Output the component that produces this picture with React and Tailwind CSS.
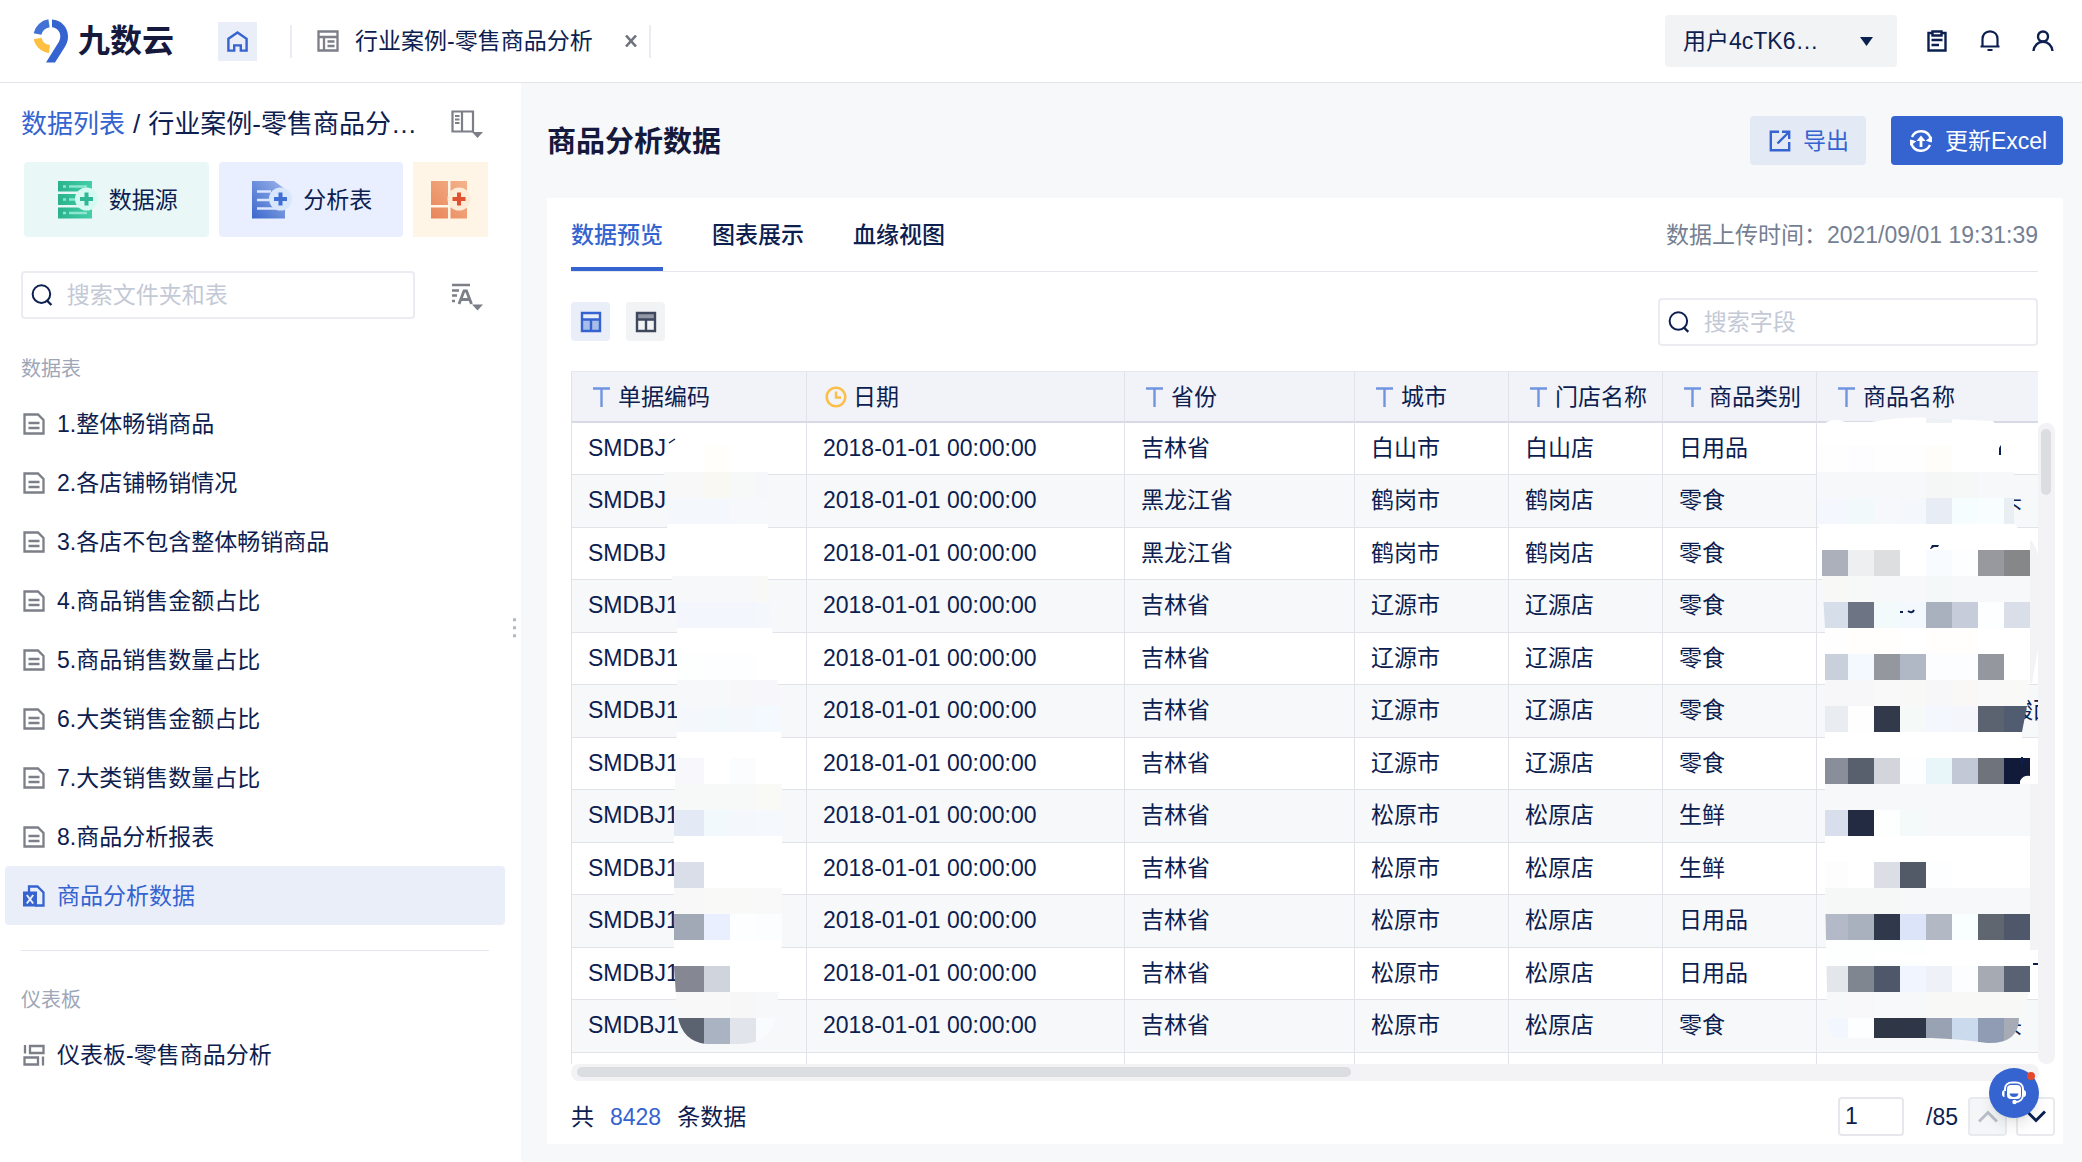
import { useState } from 'react';

const TABLES = [
  '1.整体畅销商品',
  '2.各店铺畅销情况',
  '3.各店不包含整体畅销商品',
  '4.商品销售金额占比',
  '5.商品销售数量占比',
  '6.大类销售金额占比',
  '7.大类销售数量占比',
  '8.商品分析报表',
];

const COLUMNS = [
  { label: '单据编码', type: 'text', width: 'w-[235px]' },
  { label: '日期', type: 'date', width: 'w-[318px]' },
  { label: '省份', type: 'text', width: 'w-[230px]' },
  { label: '城市', type: 'text', width: 'w-[154px]' },
  { label: '门店名称', type: 'text', width: 'w-[154px]' },
  { label: '商品类别', type: 'text', width: 'w-[154px]' },
  { label: '商品名称', type: 'text', width: 'w-[260px]' },
];

const DATE = '2018-01-01 00:00:00';

const ROWS = [
  ['SMDBJ1', DATE, '吉林省', '白山市', '白山店', '日用品', ''],
  ['SMDBJ', DATE, '黑龙江省', '鹤岗市', '鹤岗店', '零食', '头'],
  ['SMDBJ', DATE, '黑龙江省', '鹤岗市', '鹤岗店', '零食', ''],
  ['SMDBJ1', DATE, '吉林省', '辽源市', '辽源店', '零食', ''],
  ['SMDBJ1', DATE, '吉林省', '辽源市', '辽源店', '零食', ''],
  ['SMDBJ1', DATE, '吉林省', '辽源市', '辽源店', '零食', '酸面'],
  ['SMDBJ1', DATE, '吉林省', '辽源市', '辽源店', '零食', ''],
  ['SMDBJ1', DATE, '吉林省', '松原市', '松原店', '生鲜', ''],
  ['SMDBJ1', DATE, '吉林省', '松原市', '松原店', '生鲜', ''],
  ['SMDBJ1', DATE, '吉林省', '松原市', '松原店', '日用品', ''],
  ['SMDBJ1', DATE, '吉林省', '松原市', '松原店', '日用品', ''],
  ['SMDBJ1', DATE, '吉林省', '松原市', '松原店', '零食', '头'],
  ['', '', '', '', '', '', ''],
];

// One entry per 26px band, top to bottom
const W = '#ffffff';
const G = '#f7f8fa';
const CODE_MASK = [
  [W, '#fffefb', W, W],
  ['#f7f8f7', '#f9f8f3', '#f7f9f8', '#f6f7fb'],
  ['#f4f8fd', '#f4f8fd', '#f6f8fb', '#f7f8fb'],
  [W, W, W, W],
  [W, W, W, W],
  [G, G, G, '#f8f8f7'],
  ['#f3f7fd', '#f3f7fd', '#f3f7fd', '#f4f8fd'],
  [W, W, W, W],
  ['#fdfefe', '#fdfeff', '#fdfeff', W],
  [G, '#f7f8f9', '#f7f7fa', '#f7f6fb'],
  ['#f4f8fd', '#f3f8fd', '#f4f8fd', '#f3f9fe'],
  [W, W, W, W],
  ['#f8f7fc', W, '#fbfcfe', W],
  ['#f7f8f8', '#f7f8f8', '#f7f8f8', '#f9f9f5'],
  ['#e4eaf5', '#f1f9fc', '#f4f8fd', '#f5f9fe'],
  [W, W, W, W],
  ['#dadee8', W, W, W],
  ['#f8f8f8', '#f9f9f8', '#f9f9f8', '#f9f9f9'],
  ['#a2a9b6', '#e9efff', '#fdfeff', '#fcfdfe'],
  [W, W, W, W],
  ['#858793', '#d0d5dd', W, W],
  ['#f8f8f8', '#f8f8f8', '#f7f7f8', G],
  ['#5b6370', '#a9b3c2', '#e1e4ea', '#f8fcff'],
];

const NAME_MASK = [
  ['#fdfefd', '#fdfdff', '#fefeff', '#fefeff', '#fefdfa', W, W, W],
  [G, G, G, G, '#f5f7f6', '#f6f8f7', G, G],
  ['#f4f7fd', '#f1f9fa', '#f6f8fb', '#f4f7fc', '#e8ecf5', '#f6fdff', '#f8feff', '#e9eef3'],
  [W, W, W, W, W, W, W, W],
  ['#acb0bb', '#eeeff1', '#dcdee0', W, '#f8fbff', '#fdfeff', '#97999e', '#858789'],
  ['#f8f9f6', '#f7f8f8', G, G, '#f5f8f8', G, G, G],
  ['#d6deea', '#6d7484', '#f3fafc', '#f3f8fe', '#a9b0be', '#c6ccd9', '#fcfeff', '#d9dee8'],
  ['#fefefe', '#fffefc', '#fffefc', W, '#fffefc', '#fffefd', W, W],
  ['#c9cfdb', '#f4f9ff', '#94979d', '#b0b7c5', '#fbfdff', '#fcfdff', '#94979d', W],
  ['#f7f7fa', '#f7f7fa', '#f8f9f8', '#f8f9f7', '#f7f7fa', '#f9f8f7', '#f8f9f8', '#f9f9f7'],
  ['#e9edf1', '#fefefe', '#31394a', '#f5f9f8', '#f4f7fd', '#f4f6fb', '#5b6270', '#515c70'],
  [W, W, W, W, W, W, W, W],
  ['#8a8e9a', '#58606e', '#d2d6dc', '#fcfeff', '#e9f6f9', '#c3c8d6', '#6f747c', '#121a3a'],
  [G, G, G, G, G, G, G, G],
  ['#d8deeb', '#232b42', '#fdfefe', '#f4f9f9', G, G, G, G],
  [W, W, W, W, W, W, W, W],
  ['#fefdfe', W, '#dbdfe5', '#525a68', '#fcfeff', W, W, W],
  ['#f6f8f8', '#f6f8f8', '#f6f8f8', G, G, G, G, G],
  ['#b3b9c6', '#a9b0be', '#30384b', '#dbe4f8', '#b2b8c4', '#f9feff', '#60666f', '#4e586a'],
  ['#fdfefe', '#fdfefe', '#fdfefe', '#fdfefe', W, W, W, W],
  ['#e3e7ec', '#80868f', '#4f586a', '#f1f5ff', '#eef1f8', '#fcfdff', '#a6aab2', '#596273'],
  [G, '#f8f8fa', '#f8f9fb', '#f7f8fa', '#f8f9f7', '#f8f9f7', '#f8f9f7', '#f8f9f7'],
  ['#f2f6fe', '#fdfeff', '#2f3746', '#2f3648', '#98a2b2', '#cbdaec', '#8f9cb4', '#a6abb5'],
];

const Blocks = ({ rows, x }) =>
  rows.map((row, r) =>
    row.map((fill, c) => (
      // first column runs under the clip edge on its left side
      <rect
        key={`${r}-${c}`}
        x={c === 0 ? x - 14 : x + c * 26}
        y={75 + r * 26}
        width={c === 0 ? 40 : 26}
        height={26}
        fill={fill}
      />
    ))
  );

const Mosaic = () => (
  <svg className="absolute left-0 top-0 pointer-events-none" width="1484" height="693" viewBox="0 0 1484 693" shapeRendering="crispEdges" aria-hidden="true">
    <defs>
      <clipPath id="codeMask">
        <path d="M94 76 L100 60 Q150 48 200 56 Q206 70 197 101 L197 205 L201 257 L207 309 L210 361 L213 413 L212 517 L211 569 L208 621 L204 647 Q200 673 168 673 L135 673 Q109 670 106 640 L103 595 L103 439 L106 361 L106 257 L101 205 L96 153 L93 101 Z" />
      </clipPath>
      <clipPath id="nameMask">
        <path d="M1246 60 Q1258 44 1274 51 L1300 51 Q1340 44 1374 48 L1422 50 Q1430 60 1430 70 Q1428 88 1398 101 L1443 101 L1443 153 L1459 170 L1459 304 L1456 335 L1451 361 L1451 387 L1459 387 L1459 621 L1448 647 Q1448 673 1416 672 Q1390 668 1360 667 L1262 667 Q1254 655 1256 621 L1254 517 L1254 257 L1251 205 L1251 179 L1247 153 L1246 101 Z" />
      </clipPath>
    </defs>
    <g clipPath="url(#codeMask)">
      <rect x="90" y="60" width="130" height="16" fill="#ffffff" />
      <Blocks rows={CODE_MASK} x={107} />
    </g>
    <path d="M98 72 L104 68" stroke="#0c2050" strokeWidth="1.500" shapeRendering="auto" />
    <g clipPath="url(#nameMask)">
      <rect x="1240" y="40" width="220" height="36" fill="#ffffff" />
      <rect x="1355" y="40" width="26" height="12" fill="#eef2f7" />
      <Blocks rows={NAME_MASK} x={1251} />
    </g>
    <g shapeRendering="auto">
      <path d="M1459 169 Q1464 172 1467 184 L1467 278 L1461 312 L1459 312 Z" fill="#f3f3f5" />
      <path d="M1459 413 H1467 V579 H1459 Z" fill="#f3f3f5" />
      <path d="M1304 579 L1350 584 L1392 590 L1304 590 Z" fill="#ffffff" />
      <path d="M1449 410 Q1452 404 1459 405 V413 H1449 Z" fill="#ffffff" />
      <path d="M1428 77 L1430 74 V84 H1428 Z" fill="#0c2050" />
      <path d="M1359 178 L1361 174 H1368 L1367 176 H1363 L1360 178 Z" fill="#0c2050" />
      <path d="M1329 241 L1332 241 M1337 240 Q1341 243 1343 239" stroke="#0c2050" strokeWidth="2" fill="none" />
      <path d="M1462 593 H1467" stroke="#0c2050" strokeWidth="2" />
      <path d="M1450 386 H1452 V394 H1450 Z" fill="#0c2050" />
    </g>
  </svg>
);

const Logo = () => (
  <svg width="36" height="44" viewBox="0 0 36 44" fill="none" aria-hidden="true">
    <path d="M16 4.200 A14 14 0 0 0 4.500 15" stroke="#4372d6" strokeWidth="8" />
    <path d="M4.600 19.500 A14 13 0 0 0 16.500 30" stroke="#fdc043" strokeWidth="8" />
    <path d="M19 0.500 C28 1 35 8 35 17.500 C35 22 33.500 25 31.500 28.500 L22 43.500 H13 L24.500 25 C26.500 22 27.300 20 27.300 17 C27.300 12.500 24 8.800 19 8.200 Z" fill="#3563d0" />
  </svg>
);

const HomeIcon = () => (
  <svg width="21" height="21" viewBox="0 0 21 21" fill="none" stroke="#3563d0" strokeWidth="2.400" aria-hidden="true">
    <path d="M1.400 7.800 L10.500 1.500 L19.600 7.800 V19.600 H13.800 V14.400 H7.200 V19.600 H1.400 Z" />
  </svg>
);

const ReportIcon = () => (
  <svg width="22" height="22" viewBox="0 0 22 22" fill="none" stroke="#7c7f88" strokeWidth="2.300" aria-hidden="true">
    <path d="M1.500 1.500 H20.500 V20.500 H1.500 Z M1.500 7 H20.500 M7 7 V20.500 M10.500 11.500 H17.500 M10.500 16 H17.500" />
  </svg>
);

const FileIcon = () => (
  <svg width="22" height="22" viewBox="0 0 22 22" fill="none" stroke="#7c7f88" strokeWidth="2.300" aria-hidden="true">
    <path d="M1.500 1.500 H15 L20.500 7 V20.500 H1.500 Z M5.500 10 H16.500 M5.500 15 H16.500" />
  </svg>
);

const ExcelIcon = () => (
  <svg width="22" height="22" viewBox="0 0 22 22" fill="none" aria-hidden="true">
    <path d="M6 7 V1.500 H14.500 L20.500 7.500 V20.500 H12" stroke="#3563d0" strokeWidth="2.300" />
    <path d="M0 6.500 H14 V21.500 H0 Z" fill="#3563d0" />
    <path d="M3.800 10 L10.200 18.500 M10.200 10 L3.800 18.500" stroke="#eaeef9" strokeWidth="2" />
  </svg>
);

const DashboardIcon = () => (
  <svg width="22" height="22" viewBox="0 0 22 22" fill="none" stroke="#7c7f88" strokeWidth="2.300" aria-hidden="true">
    <path d="M2 1 V9.500 M7 2 H20.500 V9 H7 Z M1.500 13.500 H15 V20.500 H1.500 Z M20 12.500 V21.500" />
  </svg>
);

const PanelIcon = () => (
  <svg width="32" height="28" viewBox="0 0 32 28" aria-hidden="true">
    <path d="M1.500 1.500 H22 V21.500 H1.500 Z M11 1.500 V21.500 M4 6 H8.500 M4 9.500 H8.500 M4 13 H8.500" fill="none" stroke="#7c7f88" strokeWidth="2.200" />
    <path d="M21 22 H32 L26.500 28 Z" fill="#7c7f88" />
  </svg>
);

const SortIcon = () => (
  <svg width="32" height="28" viewBox="0 0 32 28" aria-hidden="true">
    <path d="M1 2 H19 M1 7.500 H8 M1 12.500 H6 M1 18 H4" fill="none" stroke="#7c7f88" strokeWidth="2.400" />
    <path d="M8 21 L13 8 H15.500 L20.500 21 M10.200 16.500 H18.500" fill="none" stroke="#7c7f88" strokeWidth="2.800" />
    <path d="M21 21.500 H32 L26.500 27.500 Z" fill="#7c7f88" />
  </svg>
);

const SearchIcon = () => (
  <svg width="24" height="24" viewBox="0 0 24 24" fill="none" stroke="#0c2050" strokeWidth="2.200" aria-hidden="true">
    <circle cx="11.500" cy="11" r="9.700" />
    <path d="M17 17.500 L22.500 23" strokeWidth="2.600" />
  </svg>
);

const SourceArt = () => (
  <svg width="42" height="40" viewBox="0 0 42 40" aria-hidden="true">
    <defs>
      <linearGradient id="src" x1="0" x2="1">
        <stop offset="0" stopColor="#2bb28c" />
        <stop offset="1" stopColor="#43cfaa" />
      </linearGradient>
    </defs>
    <path d="M1 1 H35 V11.500 H1 Z M1 14 H35 V25 H1 Z M1 27.500 H35 V38.500 H1 Z" fill="url(#src)" />
    <path d="M6 6.500 H9 M12 6.500 H30 M6 19.500 H9 M12 19.500 H18 M6 33 H9 M12 33 H30" stroke="#8fe6cf" strokeWidth="2.500" />
    <circle cx="29.500" cy="19" r="11.500" fill="#d6faf2" />
    <path d="M29.500 12.500 V25.500 M23 19 H36" stroke="#2fb893" strokeWidth="4" />
  </svg>
);

const AnalysisArt = () => (
  <svg width="42" height="40" viewBox="0 0 42 40" aria-hidden="true">
    <defs>
      <linearGradient id="ana" x1="0" y1="1" x2="1" y2="0">
        <stop offset="0" stopColor="#3a68cc" />
        <stop offset="1" stopColor="#9db4ea" />
      </linearGradient>
    </defs>
    <path d="M1 1 H23 L34 9 V38.500 H1 Z" fill="url(#ana)" />
    <path d="M6 11.500 H20 M6 20 H18 M6 28.500 H26" stroke="#dbe6ff" strokeWidth="2.600" />
    <circle cx="29.500" cy="19" r="11.500" fill="#d8e6fc" />
    <path d="M29.500 12.500 V25.500 M23 19 H36" stroke="#3f6fd3" strokeWidth="4" />
  </svg>
);

const BoardArt = () => (
  <svg width="42" height="40" viewBox="0 0 42 40" aria-hidden="true">
    <defs>
      <linearGradient id="brd" x1="0" y1="1" x2="1" y2="0">
        <stop offset="0" stopColor="#e8855a" />
        <stop offset="1" stopColor="#f5b48c" />
      </linearGradient>
    </defs>
    <path d="M1 1 H18 V25 H1 Z M20.500 1 H37 V25 H20.500 Z M1 27.500 H18 V38.500 H1 Z M20.500 27.500 H37 V38.500 H20.500 Z" fill="url(#brd)" />
    <circle cx="29" cy="19" r="11.500" fill="#fdebd6" />
    <path d="M29 12.500 V25.500 M22.500 19 H35.500" stroke="#e2512f" strokeWidth="4" />
  </svg>
);

const TypeIcon = ({ type }) =>
  type === 'date' ? (
    <svg width="22" height="22" viewBox="0 0 22 22" fill="none" stroke="#fcbf49" strokeWidth="2.600" aria-hidden="true">
      <circle cx="11" cy="11" r="9.300" />
      <path d="M11 5.500 V11.500 H16" strokeWidth="2.400" />
    </svg>
  ) : (
    <svg width="22" height="22" viewBox="0 0 22 22" fill="none" stroke="#6f95e0" strokeWidth="2.400" aria-hidden="true">
      <path d="M3 2.500 H20 M11.500 2.500 V21" />
    </svg>
  );

const Sidebar = () => (
  <aside className="relative w-[521px] shrink-0 bg-white">
    <div className="flex h-[79px] items-center pl-[21px] pt-[2px]">
      <p className="w-[430px] whitespace-nowrap text-[26px] leading-8">
        <a href="#list" className="text-[#3563d0]">数据列表</a>
        <span className="mx-2">/</span>
        行业案例-零售商品分…
      </p>
      <button type="button" aria-label="布局"><PanelIcon /></button>
    </div>

    <div className="flex gap-[10px] pl-6 pr-[33px]">
      <button type="button" className="flex h-[75px] flex-1 items-center justify-center gap-[10px] rounded bg-[#e9f7f7] pl-[2px]">
        <SourceArt /> 数据源
      </button>
      <button type="button" className="flex h-[75px] flex-1 items-center justify-center gap-[10px] rounded bg-[#e9efff] pl-[2px]">
        <AnalysisArt /> 分析表
      </button>
      <button type="button" aria-label="仪表板" className="flex h-[75px] w-[75px] items-center justify-center bg-[#fff5e7]">
        <BoardArt />
      </button>
    </div>

    <div className="mt-[34px] flex items-center pl-[21px]">
      <label className="flex h-12 w-[394px] items-center gap-[14px] rounded border-2 border-[#ebecf2] pl-2">
        <SearchIcon />
        <input type="text" aria-label="搜索文件夹和表" placeholder="搜索文件夹和表" className="w-full outline-none placeholder:text-[#c3c9d5]" />
      </label>
      <button type="button" aria-label="排序" className="ml-9 pt-1"><SortIcon /></button>
    </div>

    <h2 className="mt-[25px] pl-[21px] text-[20px] leading-[50px] text-[#9ea6b8]">数据表</h2>
    <nav className="pl-[5px] pr-4">
      {TABLES.map((name) => (
        <a key={name} href="#table" className="flex h-[59px] items-center gap-3 px-[18px]">
          <FileIcon /> {name}
        </a>
      ))}
      <a href="#table" className="flex h-[59px] items-center gap-3 rounded bg-[#eaeef9] px-[18px] text-[#3563d0]">
        <ExcelIcon /> 商品分析数据
      </a>
    </nav>
    <hr className="ml-[21px] mr-8 mt-[25px] border-[#e6e7ee]" />
    <h2 className="mt-6 pl-[21px] text-[20px] leading-[50px] text-[#9ea6b8]">仪表板</h2>
    <nav className="pl-[5px] pr-4">
      <a href="#board" className="flex h-[59px] items-center gap-3 px-[18px]">
        <DashboardIcon /> 仪表板-零售商品分析
      </a>
    </nav>

    {/* drag handle */}
    <div className="absolute right-[5px] top-1/2 flex -translate-y-1/4 flex-col gap-[5px]">
      <span className="h-[3px] w-[3px] bg-[#b4b8c2]"></span>
      <span className="h-[3px] w-[3px] bg-[#b4b8c2]"></span>
      <span className="h-[3px] w-[3px] bg-[#b4b8c2]"></span>
    </div>
  </aside>
);

const Header = () => (
  <header className="flex h-[83px] shrink-0 items-center border-b border-[#e3e4ea] bg-white pl-[33px] pr-7">
    <Logo />
    <span className="ml-[9px] text-[32px] font-bold leading-10 text-[#15193c]">九数云</span>
    <button type="button" aria-label="首页" className="ml-[44px] flex h-[39px] w-[39px] items-center justify-center bg-[#eaeef9]">
      <HomeIcon />
    </button>
    <div className="ml-[33px] flex h-[33px] items-center border-x-2 border-[#ebecf1] pl-[25px] pr-3">
      <ReportIcon />
      <span className="ml-4 w-[240px] whitespace-nowrap">行业案例-零售商品分析</span>
      <button type="button" aria-label="关闭" className="ml-[30px]">
        <svg width="12" height="12" viewBox="0 0 12 12" fill="none" stroke="#6f737c" strokeWidth="2.600" aria-hidden="true">
          <path d="M1 0.500 L11 11.500 M11 0.500 L1 11.500" />
        </svg>
      </button>
    </div>

    <div className="relative ml-auto">
      <select aria-label="用户" className="h-[52px] w-[232px] appearance-none rounded bg-[#f2f3f5] pl-[18px]">
        <option>用户4cTK6…</option>
      </select>
      <svg className="pointer-events-none absolute right-6 top-[22px]" width="13" height="9" viewBox="0 0 13 9" aria-hidden="true">
        <path d="M0 0 H13 L6.500 9 Z" fill="#0c2050" />
      </svg>
    </div>
    <button type="button" aria-label="任务" className="ml-[29px]">
      <svg width="22" height="22" viewBox="0 0 22 22" fill="none" stroke="#0c2050" strokeWidth="2.400" aria-hidden="true">
        <path d="M6.500 3 H2.500 V20.500 H19.500 V3 H15.500 M6.500 1.500 H15.500 V5.500 H6.500 Z M5.500 10 H16.500 M5.500 15 H13" />
      </svg>
    </button>
    <button type="button" aria-label="通知" className="ml-[31px]">
      <svg width="22" height="22" viewBox="0 0 22 22" fill="none" stroke="#0c2050" strokeWidth="2.200" aria-hidden="true">
        <path d="M3.500 16 V9 C3.500 4.500 6.500 1.300 11 1.300 C15.500 1.300 18.500 4.500 18.500 9 V16 M1.500 16.500 H20.500 M8.500 20 H13.500" />
      </svg>
    </button>
    <button type="button" aria-label="账户" className="ml-[31px]">
      <svg width="22" height="22" viewBox="0 0 22 22" fill="none" stroke="#0c2050" strokeWidth="2.400" aria-hidden="true">
        <circle cx="11" cy="6.500" r="5" />
        <path d="M1.500 21 C2 15.500 6 11.800 11 11.800 C16 11.800 20 15.500 20.500 21" />
      </svg>
    </button>
  </header>
);

const DataTable = () => (
  <table className="w-[1505px] table-fixed border-separate border-spacing-0 text-left">
    <thead>
      <tr>
        {COLUMNS.map((col) => (
          <th key={col.label} className={`${col.width} h-[52px] border-b-2 border-l border-t border-b-[#d5dae4] border-l-[#e1e3e9] border-t-[#e6e8ed] bg-[#f2f3f8] p-0 pl-[18px] font-normal`}>
            <span className="flex items-center gap-[6px] whitespace-nowrap">
              <TypeIcon type={col.type} /> {col.label}
            </span>
          </th>
        ))}
      </tr>
    </thead>
    <tbody>
      {ROWS.map((row, r) => (
        <tr key={r} className={r % 2 ? 'h-[53px] bg-[#f7f8fa]' : 'h-[52px] bg-white'}>
          {row.map((cell, c) => (
            <td
              key={c}
              className={`overflow-hidden whitespace-nowrap border-b border-l border-[#e1e3e9] p-0 pb-[2px] ${c === 6 ? (cell.length > 1 ? 'pl-[193px]' : 'pl-[182px]') : 'pl-4'}`}
            >
              {cell}
            </td>
          ))}
        </tr>
      ))}
    </tbody>
  </table>
);

const App = () => {
  const [tab, setTab] = useState('数据预览');
  const [page, setPage] = useState('1');

  return (
    <div className="flex h-screen flex-col bg-[#f7f8fa] text-[23px] leading-8 text-[#0c2050] [font-family:'Liberation_Sans','Noto_Sans_CJK_SC',sans-serif]">
      <Header />
      <div className="flex min-h-0 flex-1">
        <Sidebar />
        <main className="flex min-w-0 flex-1 flex-col pb-[18px] pl-[26px] pr-[19px]">
          <div className="my-[33px] flex h-[49px] shrink-0 items-center">
            <h1 className="pt-[2px] text-[29px] font-bold text-[#15193c]">商品分析数据</h1>
            <button type="button" className="ml-auto flex h-[49px] w-[116px] items-center justify-center gap-3 rounded bg-[#e4eaf5] pl-[2px] text-[#3563d0]">
              <svg width="22" height="22" viewBox="0 0 22 22" fill="none" stroke="#3563d0" strokeWidth="2.400" aria-hidden="true">
                <path d="M10 1.800 H1.800 V20.200 H20.200 V12 M13 1.800 H20.200 V9 M20 2 L8.500 13.500" />
              </svg>
              导出
            </button>
            <button type="button" className="ml-[25px] flex h-[49px] w-[172px] items-center justify-center gap-3 rounded bg-[#3563d0] pl-[2px] text-white">
              <svg width="24" height="24" viewBox="0 0 24 24" fill="none" stroke="#ffffff" strokeWidth="2.400" aria-hidden="true">
                <path d="M3 8 A10 10 0 0 1 21.500 9 M21 16 A10 10 0 0 1 2.500 15" />
                <path d="M22.500 13 L17.500 11.500 L22.500 8 Z M1.500 11 L6.500 12.500 L1.500 16 Z" fill="#ffffff" strokeWidth="1" />
                <path d="M12 18 V9" strokeWidth="2.800" />
                <path d="M7.500 12 L12 6.500 L16.500 12 Z" fill="#ffffff" stroke="none" />
              </svg>
              更新Excel
            </button>
          </div>

          <section className="flex min-h-0 flex-1 flex-col bg-white pl-6 pr-2">
            {/* tabs */}
            <div className="mr-[17px] flex h-[74px] shrink-0 gap-[49px] border-b border-[#e6e7ee]">
              {['数据预览', '图表展示', '血缘视图'].map((name) => (
                <button
                  key={name}
                  type="button"
                  onClick={() => setTab(name)}
                  className={`h-[73px] border-y-4 border-t-transparent font-medium ${tab === name ? 'border-b-[#3563d0] text-[#3563d0]' : 'border-b-transparent'}`}
                >
                  {name}
                </button>
              ))}
              <p className="ml-auto self-center text-[#757f93]">数据上传时间：2021/09/01 19:31:39</p>
            </div>

            {/* toolbar */}
            <div className="mr-[17px] flex h-[99px] shrink-0 items-center gap-4">
              <button type="button" aria-label="表格视图" className="flex h-[39px] w-[39px] items-center justify-center rounded bg-[#eaeef9]">
                <svg width="22" height="22" viewBox="0 0 22 22" aria-hidden="true">
                  <path d="M2 9 H20 V20 H2 Z" fill="#a9bdea" />
                  <path d="M2 2 H20 V20 H2 Z M2 8.500 H20 M11 8.500 V20" fill="none" stroke="#3563d0" strokeWidth="2.400" />
                </svg>
              </button>
              <button type="button" aria-label="表头视图" className="flex h-[39px] w-[39px] items-center justify-center rounded bg-[#f2f3f5]">
                <svg width="22" height="22" viewBox="0 0 22 22" aria-hidden="true">
                  <path d="M2 2 H20 V8.500 H2 Z" fill="#9298a6" />
                  <path d="M2 2 H20 V20 H2 Z M2 8.500 H20 M11 8.500 V20" fill="none" stroke="#3f475f" strokeWidth="2.400" />
                </svg>
              </button>
              <label className="ml-auto flex h-12 w-[380px] items-center gap-[14px] rounded border-2 border-[#ebecf2] pl-2">
                <SearchIcon />
                <input type="text" aria-label="搜索字段" placeholder="搜索字段" className="w-full outline-none placeholder:text-[#c3c9d5]" />
              </label>
            </div>

            {/* grid with its scroll bars */}
            <div className="flex min-h-0 flex-1">
              <div className="relative min-w-0 flex-1 overflow-hidden">
                <DataTable />
                <Mosaic />
              </div>
              <div className="mt-[52px] w-[17px] shrink-0 rounded-lg bg-[#f3f3f5] px-[3px] pt-[6px]">
                <div className="h-[66px] w-[10px] rounded-full bg-[#dcdde0]"></div>
              </div>
            </div>
            <div className="mr-4 h-[17px] shrink-0 rounded-lg bg-[#f3f3f5] px-[6px] pt-[3px]">
              <div className="h-[10px] w-[774px] rounded-full bg-[#dcdde0]"></div>
            </div>

            <div className="flex h-[63px] shrink-0 items-center pt-2">
              <p>共<span className="mx-4 text-[#3563d0]">8428</span>条数据</p>
              <input
                type="text"
                aria-label="页码"
                value={page}
                onChange={(e) => setPage(e.target.value)}
                className="ml-auto h-[39px] w-[66px] rounded border-2 border-[#e6e7ec] pl-[5px] outline-none"
              />
              <span className="ml-[22px] mr-[10px]">/85</span>
              <button type="button" disabled aria-label="上一页" className="flex h-[39px] w-[39px] items-center justify-center rounded border-2 border-[#e9eaee] bg-[#f5f6f8]">
                <svg width="20" height="13" viewBox="0 0 20 13" fill="none" stroke="#b9bec9" strokeWidth="3" aria-hidden="true">
                  <path d="M1 11.500 L10 2.500 L19 11.500" />
                </svg>
              </button>
              <button type="button" aria-label="下一页" className="ml-[9px] flex h-[39px] w-[39px] items-center justify-center rounded border-2 border-[#e9eaee]">
                <svg width="20" height="13" viewBox="0 0 20 13" fill="none" stroke="#0c2050" strokeWidth="3" aria-hidden="true">
                  <path d="M1 1.500 L10 10.500 L19 1.500" />
                </svg>
              </button>
            </div>
          </section>
        </main>
      </div>

      {/* support button */}
      <button type="button" aria-label="客服" className="fixed bottom-[44px] right-[43px] flex h-[50px] w-[50px] items-center justify-center rounded-full bg-[#3563d0] shadow-lg">
        <svg width="26" height="24" viewBox="0 0 26 24" fill="none" aria-hidden="true">
          <path d="M4 10 V8 C4 4 7 1.500 11 1.500 H15 C19 1.500 22 4 22 8 V14 C22 18 19 21 14 21" stroke="#ffffff" strokeWidth="2" />
          <rect x="6" y="4" width="14" height="14" rx="4" fill="#ffffff" />
          <path d="M8.500 12.500 H17.500 C17 15 15.500 16 13 16 C10.500 16 9 15 8.500 12.500 Z" fill="#3563d0" />
          <path d="M3.500 9 C1.500 9 1 10.500 1 12.500 C1 14.500 1.500 16 3.500 16 Z M22.500 9 C24.500 9 25 10.500 25 12.500 C25 14.500 24.500 16 22.500 16 Z" fill="#ffffff" />
          <circle cx="13.500" cy="21" r="2.200" fill="#ffffff" />
        </svg>
        <span className="absolute right-1 top-1 h-2 w-2 rounded-full bg-[#e5492d]"></span>
      </button>
    </div>
  );
};

export default App;
